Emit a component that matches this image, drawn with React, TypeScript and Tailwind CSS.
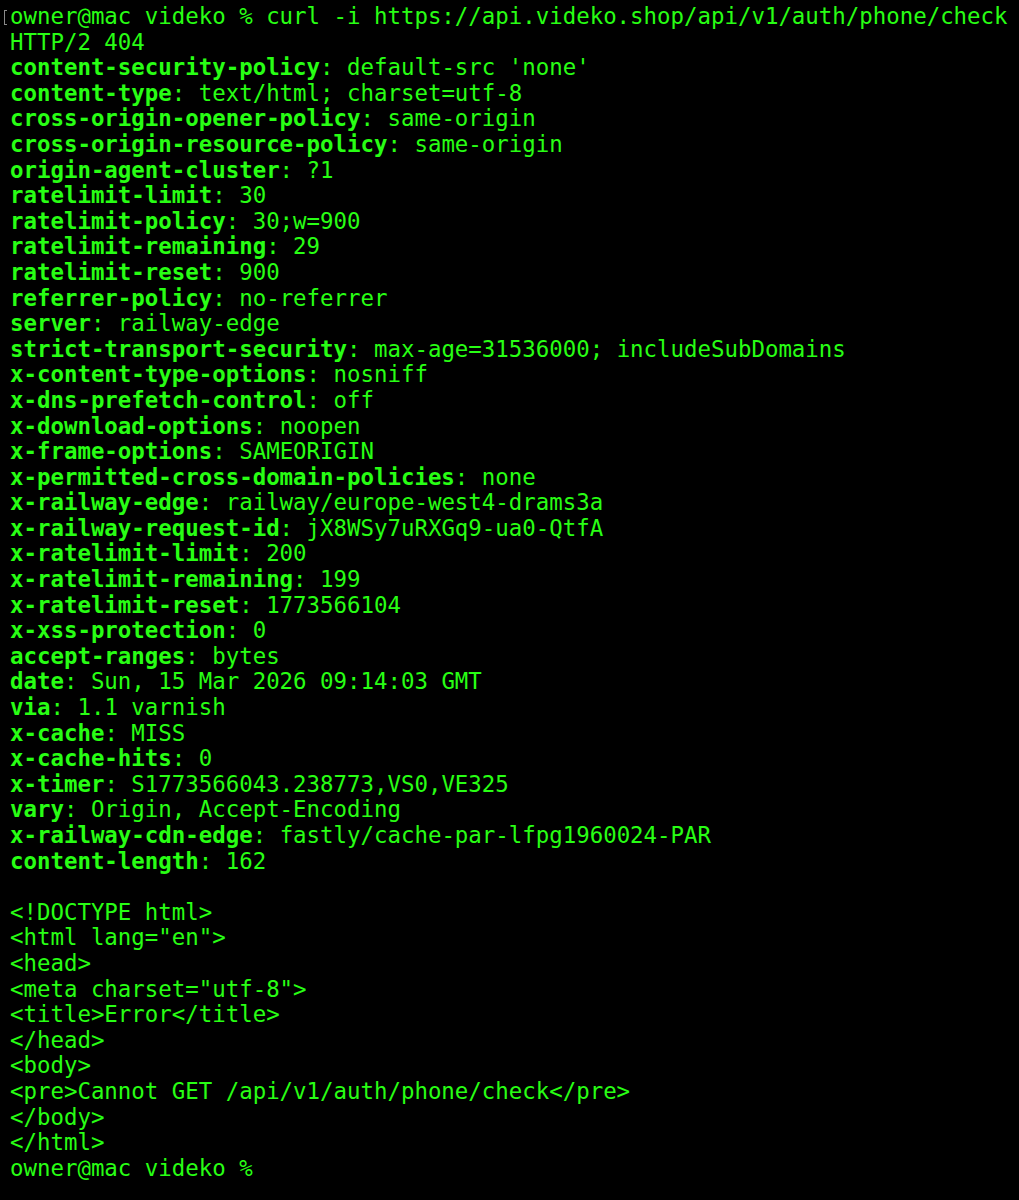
const headers: [string, string][] = [
  ["content-security-policy", "default-src 'none'"],
  ["content-type", "text/html; charset=utf-8"],
  ["cross-origin-opener-policy", "same-origin"],
  ["cross-origin-resource-policy", "same-origin"],
  ["origin-agent-cluster", "?1"],
  ["ratelimit-limit", "30"],
  ["ratelimit-policy", "30;w=900"],
  ["ratelimit-remaining", "29"],
  ["ratelimit-reset", "900"],
  ["referrer-policy", "no-referrer"],
  ["server", "railway-edge"],
  ["strict-transport-security", "max-age=31536000; includeSubDomains"],
  ["x-content-type-options", "nosniff"],
  ["x-dns-prefetch-control", "off"],
  ["x-download-options", "noopen"],
  ["x-frame-options", "SAMEORIGIN"],
  ["x-permitted-cross-domain-policies", "none"],
  ["x-railway-edge", "railway/europe-west4-drams3a"],
  ["x-railway-request-id", "jX8WSy7uRXGq9-ua0-QtfA"],
  ["x-ratelimit-limit", "200"],
  ["x-ratelimit-remaining", "199"],
  ["x-ratelimit-reset", "1773566104"],
  ["x-xss-protection", "0"],
  ["accept-ranges", "bytes"],
  ["date", "Sun, 15 Mar 2026 09:14:03 GMT"],
  ["via", "1.1 varnish"],
  ["x-cache", "MISS"],
  ["x-cache-hits", "0"],
  ["x-timer", "S1773566043.238773,VS0,VE325"],
  ["vary", "Origin, Accept-Encoding"],
  ["x-railway-cdn-edge", "fastly/cache-par-lfpg1960024-PAR"],
  ["content-length", "162"],
];

const body = [
  "<!DOCTYPE html>",
  '<html lang="en">',
  "<head>",
  '<meta charset="utf-8">',
  "<title>Error</title>",
  "</head>",
  "<body>",
  "<pre>Cannot GET /api/v1/auth/phone/check</pre>",
  "</body>",
  "</html>",
];

export default function App() {
  return (
    <div className="min-h-[1200px] w-full bg-black text-[#28fe14] font-['DejaVu_Sans_Mono',monospace] text-[22.4px] leading-[25.6px] whitespace-pre pl-[10px] pt-[4px] overflow-hidden">
      <div className="relative">
        {/* terminal mark bracket */}
        <div className="absolute left-[-6px] top-[6px] h-[15px] w-[3px] border-l border-y border-[#8a8a8a]" />
        owner@mac videko % curl -i https://api.videko.shop/api/v1/auth/phone/check
      </div>
      <div>HTTP/2 404</div>
      {headers.map(([k, v]) => (
        <div key={k}>
          <span className="font-bold">{k}</span>: {v}
        </div>
      ))}
      <div>&nbsp;</div>
      {body.map((line) => (
        <div key={line}>{line}</div>
      ))}
      <div>owner@mac videko % </div>
    </div>
  );
}
